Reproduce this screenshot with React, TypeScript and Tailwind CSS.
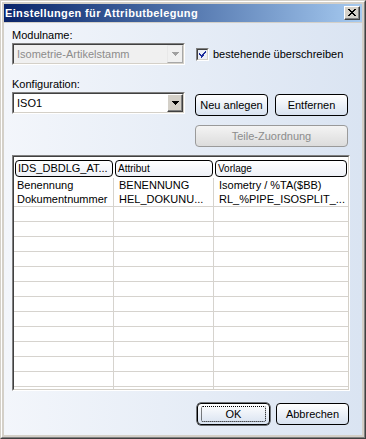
const font = { fontFamily: '"Liberation Sans", Arial, sans-serif' };

const rows = [
  ["Benennung", "BENENNUNG", "Isometry / %TA($BB)"],
  ["Dokumentnummer", "HEL_DOKUNU...", "RL_%PIPE_ISOSPLIT_..."],
];

function Arrow({ color }: { color: string }) {
  return (
    <svg width="7" height="4" viewBox="0 0 7 4" shapeRendering="crispEdges">
      <path d="M0 0h7v1H0zM1 1h5v1H1zM2 2h3v1H2zM3 3h1v1H3z" fill={color} />
    </svg>
  );
}

function Combo({ value, disabled }: { value: string; disabled?: boolean }) {
  return (
    <div className="w-[173px] h-[22px] border border-t-[#808080] border-l-[#808080] border-r-white border-b-white">
      <div
        className={`h-full flex items-center border border-t-[#404040] border-l-[#404040] border-r-[#d4d0c8] border-b-[#d4d0c8] ${
          disabled ? "bg-[#f0f0f0]" : "bg-white"
        }`}
      >
        <span className={`flex-1 pl-[3px] text-[11px] leading-[13px] ${disabled ? "text-[#8c8c8c]" : "text-black"}`}>
          {value}
        </span>
        <div
          className={`w-[16px] h-full flex items-center justify-center border ${
            disabled
              ? "bg-[#f0f0f0] border-t-[#e8e8e8] border-l-[#e8e8e8] border-r-[#a8a8a8] border-b-[#a8a8a8]"
              : "bg-[#d4d0c8] border-t-white border-l-white border-r-[#404040] border-b-[#404040] shadow-[inset_-1px_-1px_0_#808080]"
          }`}
        >
          <Arrow color={disabled ? "#a0a0a0" : "#000"} />
        </div>
      </div>
    </div>
  );
}

function Btn({ label, disabled, def, className = "" }: { label: string; disabled?: boolean; def?: boolean; className?: string }) {
  return (
    <div
      className={`h-[22px] rounded-[4px] border flex items-center justify-center text-[11px] leading-[13px] ${
        disabled
          ? "border-[#9a9a9a] bg-gradient-to-b from-[#f4f4f4] to-[#dcdcdc] text-[#8c8c8c]"
          : "border-black bg-gradient-to-b from-white to-[#d8e2f0] text-black"
      } ${def ? "shadow-[0_0_0_0.5px_#000]" : ""} ${className}`}
    >
      {def ? (
        <div className="w-[calc(100%-6px)] h-[16px] border border-dotted border-black rounded-[2px] flex items-center justify-center">
          {label}
        </div>
      ) : (
        label
      )}
    </div>
  );
}

export default function App() {
  return (
    <div style={font} className="w-[366px] h-[439px] bg-[#d4d0c8] border border-t-[#d4d0c8] border-l-[#d4d0c8] border-r-[#404040] border-b-[#404040]">
      <div className="h-full border border-t-white border-l-white border-r-[#808080] border-b-[#808080] p-[2px] flex flex-col">
        {/* title bar */}
        <div className="h-[18px] shrink-0 flex items-center bg-gradient-to-r from-[#0a246a] to-[#a6caf0] pl-[1px] pr-[2px]">
          <span className="flex-1 text-[11px] leading-[13px] font-bold tracking-[0.35px] text-white">Einstellungen für Attributbelegung</span>
          <div className="w-[16px] h-[14px] bg-[#d4d0c8] border border-t-white border-l-white border-r-[#404040] border-b-[#404040] shadow-[inset_-1px_-1px_0_#808080] flex items-center justify-center">
            <svg width="8" height="7" viewBox="0 0 8 7" shapeRendering="crispEdges" className="-mt-[1px]">
              <path
                d="M0 0h2v1H0zM6 0h2v1H6zM1 1h2v1H1zM5 1h2v1H5zM2 2h4v1H2zM3 3h2v1H3zM2 4h4v1H2zM1 5h2v1H1zM5 5h2v1H5zM0 6h2v1H0zM6 6h2v1H6z"
                fill="#000"
              />
            </svg>
          </div>
        </div>

        {/* body */}
        <div className="flex-1 mt-[1px] bg-gradient-to-r from-[#f3f6fb] to-[#dae4f2] pt-[6px] px-[8px] text-[11px] leading-[13px] text-black">
          <div>Modulname:</div>
          <div className="flex items-center mt-[1px]">
            <Combo value="Isometrie-Artikelstamm" disabled />
            <div className="ml-[11px] flex items-center gap-[4px]">
              <div className="w-[13px] h-[13px] border border-t-[#808080] border-l-[#808080] border-r-white border-b-white">
                <div className="w-full h-full bg-[#eceef6] border border-t-[#404040] border-l-[#404040] border-r-[#d4d0c8] border-b-[#d4d0c8] flex items-center justify-center">
                  <svg width="7" height="7" viewBox="0 0 7 7" shapeRendering="crispEdges">
                    <path d="M6 0h1v2H6zM5 1h1v2H5zM4 2h1v3H4zM3 3h1v3H3zM0 2h1v2H0zM1 3h1v2H1zM2 4h1v3H2z" fill="#1c2c9c" />
                  </svg>
                </div>
              </div>
              <span>bestehende überschreiben</span>
            </div>
          </div>

          <div className="mt-[13px]">Konfiguration:</div>
          <div className="flex mt-[1px]">
            <Combo value="ISO1" />
            <div className="ml-[10px] mt-[2px] flex flex-col">
              <div className="flex gap-[7px]">
                <Btn label="Neu anlegen" className="w-[73px]" />
                <Btn label="Entfernen" className="w-[73px]" />
              </div>
              <Btn label="Teile-Zuordnung" disabled className="w-[153px] mt-[9px]" />
            </div>
          </div>

          {/* list view */}
          <div className="mt-[8px] w-[338px] h-[236px] border border-t-[#808080] border-l-[#808080] border-r-white border-b-white">
            <div className="h-full bg-white border border-t-[#404040] border-l-[#404040] border-r-[#d4d0c8] border-b-[#d4d0c8] overflow-hidden">
              <div className="flex h-[21px] pt-[3px] pb-[1px]">
                <div className="w-[100px] px-[1px]">
                  <div className="h-full rounded-[4px] border border-black bg-gradient-to-b from-white to-[#eef1f7] pl-[2px] text-[11px] leading-[15px] truncate">
                    IDS_DBDLG_AT...
                  </div>
                </div>
                <div className="w-[100px] px-[1px]">
                  <div className="h-full rounded-[4px] border border-black bg-gradient-to-b from-white to-[#eef1f7] pl-[2px] text-[10px] leading-[15px]">
                    Attribut
                  </div>
                </div>
                <div className="flex-1 px-[1px]">
                  <div className="h-full rounded-[4px] border border-black bg-gradient-to-b from-white to-[#eef1f7] pl-[2px] text-[10px] leading-[15px]">
                    Vorlage
                  </div>
                </div>
              </div>
              {Array.from({ length: 15 }).map((_, i) => {
                const r = rows[i] ?? ["", "", ""];
                return (
                  <div
                    key={i}
                    className={`flex ${i === 0 ? "h-[14px]" : "h-[15px]"} ${i === 0 ? "" : "border-b border-[#d6d3ce]"}`}
                  >
                    <div className="w-[100px] border-r border-[#d6d3ce] pl-[3px] leading-[14px]">{r[0]}</div>
                    <div className="w-[100px] border-r border-[#d6d3ce] pl-[5px] leading-[14px]">{r[1]}</div>
                    <div className="flex-1 pl-[5px] leading-[14px]">{r[2]}</div>
                  </div>
                );
              })}
            </div>
          </div>

          <div className="flex justify-end gap-[6px] mt-[12px] pr-[5px]">
            <Btn label="OK" def className="w-[73px]" />
            <Btn label="Abbrechen" className="w-[73px]" />
          </div>
        </div>
      </div>
    </div>
  );
}
